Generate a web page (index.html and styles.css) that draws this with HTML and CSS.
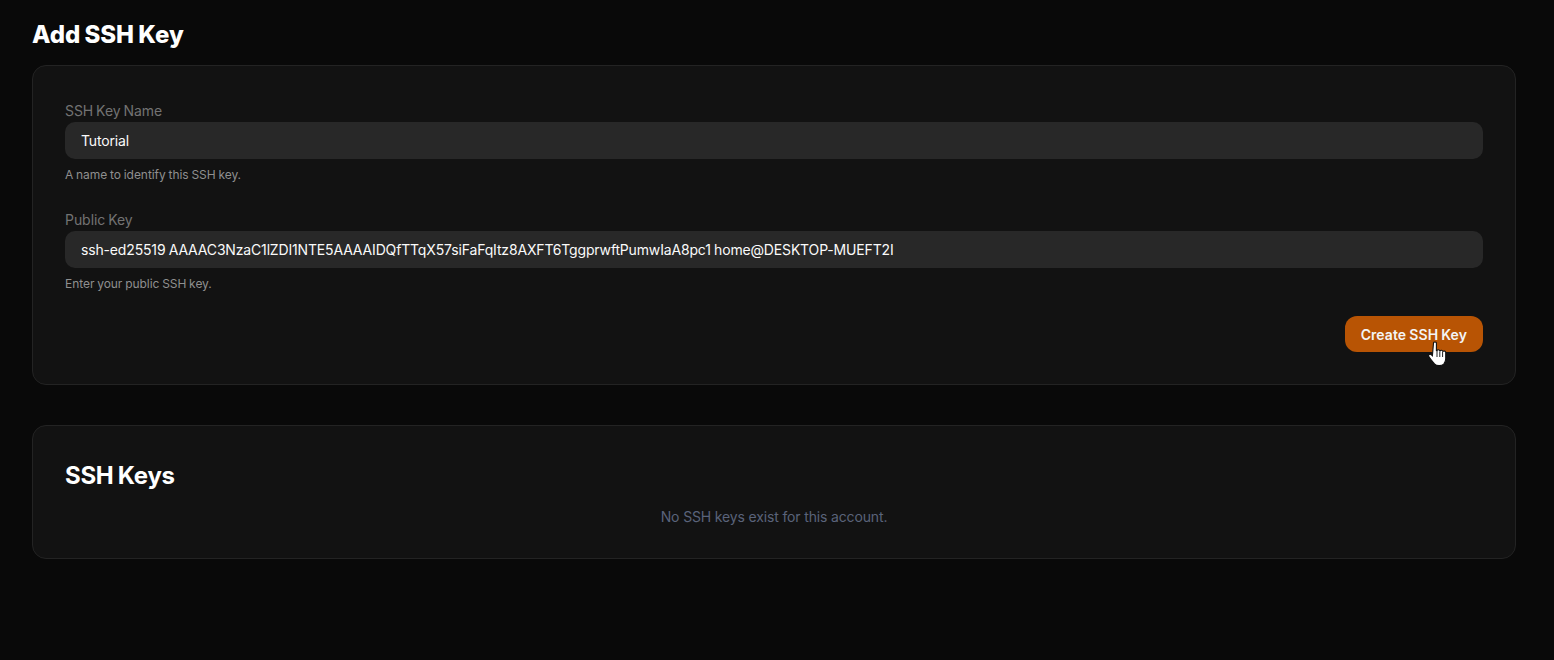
FILE: index.html
```html
<!DOCTYPE html>
<html lang="en">
<head>
<meta charset="utf-8">
<title>SSH Keys</title>
<link rel="stylesheet" href="styles.css">
</head>
<body>
<main class="page">
  <h1 class="page-title">Add SSH Key</h1>
  <form class="card form-card">
    <div class="field">
      <label class="label">SSH Key Name</label>
      <div class="input">Tutorial</div>
      <p class="hint">A name to identify this SSH key.</p>
    </div>
    <div class="field">
      <label class="label">Public Key</label>
      <div class="input">ssh-ed25519 AAAAC3NzaC1lZDI1NTE5AAAAIDQfTTqX57siFaFqItz8AXFT6TggprwftPumwIaA8pc1 home@DESKTOP-MUEFT2I</div>
      <p class="hint">Enter your public SSH key.</p>
    </div>
    <div class="actions">
      <button class="button" type="button">Create SSH Key
        <svg class="cursor" width="20" height="26" viewBox="0 0 20 26" aria-hidden="true">
          <path d="M4.500 2.200c0-1.700 2.900-1.700 2.900 0v7.300l.6.100c.4-1.200 2.500-1.100 2.700.2l.4.100c.5-1 2.400-.8 2.600.4l.4.100c.6-.7 2.600-.4 2.600.9v6.500c0 2.600-.8 4-2 5.300-1 1-2.500 1.500-4.500 1.500s-3.800-.6-4.800-1.800c-1.800-2.200-3.900-4.500-5.400-7-1.200-1.900.9-3.500 2.500-1.900l.9.900z" fill="#fff" stroke="#111" stroke-width="1.100"/>
          <path d="M8 10v6M10.800 10.500v5.500M13.600 11v5" stroke="#222" stroke-width="1" fill="none"/>
        </svg>
      </button>
    </div>
  </form>
  <section class="card list-card">
    <h2 class="section-title">SSH Keys</h2>
    <p class="empty">No SSH keys exist for this account.</p>
  </section>
</main>
</body>
</html>
```

FILE: styles.css
```css
* { box-sizing: border-box; }
html, body { margin: 0; height: 100%; }
body {
  background: #090909;
  color: #fff;
  font-family: Inter, "Noto Sans", sans-serif;
}
.page { padding: 17px 38px 0 32px; }
.page-title {
  margin: 0 0 12px;
  font-size: 24px;
  line-height: 36px;
  font-weight: 800;
  letter-spacing: -0.03px;
  word-spacing: -1px;
}
.card {
  background: #121212;
  border: 1px solid #232323;
  border-radius: 14px;
  padding: 32px;
}
.form-card { height: 320px; }
.list-card { height: 134px; margin-top: 40px; }
.field { margin-bottom: 25px; }
.label {
  display: block;
  height: 24px;
  line-height: 26px;
  font-size: 14px;
  color: #737373;
  letter-spacing: -0.05px;
  word-spacing: -1px;
}
.input {
  height: 37px;
  line-height: 37px;
  padding: 0 16px;
  background: #282828;
  border-radius: 10px;
  font-size: 14px;
  color: #fafafa;
  letter-spacing: -0.16px;
  word-spacing: -0.5px;
  white-space: nowrap;
}
.hint {
  margin: 7px 0 0;
  height: 16px;
  line-height: 18px;
  font-size: 12px;
  color: #8f8f8f;
  letter-spacing: -0.05px;
  word-spacing: -0.5px;
}
.actions { display: flex; justify-content: flex-end; margin-top: 23px; }
.button {
  position: relative;
  height: 36px;
  padding: 0 16px;
  border: 0;
  border-radius: 12px;
  background: #b85404;
  color: #f4f4f5;
  font: 600 14px Inter, "Noto Sans", sans-serif;
  letter-spacing: 0.07px;
  word-spacing: -0.5px;
}
.cursor { position: absolute; left: 84px; top: 25px; }
.section-title {
  margin: 0;
  font-size: 24px;
  line-height: 36px;
  font-weight: 700;
  letter-spacing: -0.3px;
  word-spacing: -1px;
}
.empty {
  margin: 13px 0 0;
  text-align: center;
  font-size: 14px;
  line-height: 20px;
  color: #5a637a;
  letter-spacing: -0.15px;
}
```
